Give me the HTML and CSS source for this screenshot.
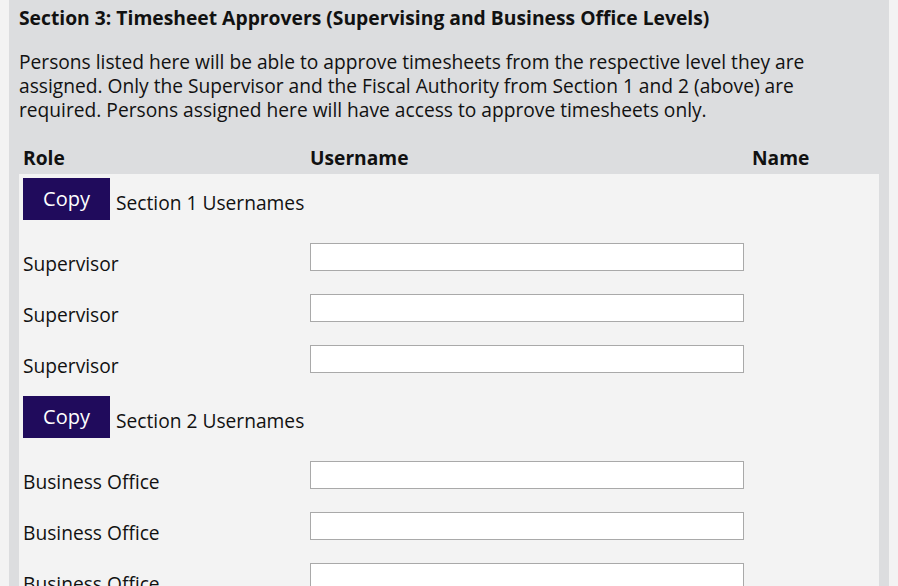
FILE: index.html
```html
<!DOCTYPE html>
<html>
<head>
<meta charset="utf-8">
<link rel="stylesheet" href="styles.css">
</head>
<body>
<div class="panel">
  <h3 class="title">Section 3: Timesheet Approvers (Supervising and Business Office Levels)</h3>
  <p class="intro">Persons listed here will be able to approve timesheets from the respective level they are assigned. Only the Supervisor and the Fiscal Authority from Section 1 and 2 (above) are required. Persons assigned here will have access to approve timesheets only.</p>
  <div class="cols head">
    <span>Role</span><span>Username</span><span>Name</span>
  </div>
  <div class="body">
    <div class="copy-row"><button class="copy">Copy</button><span class="copy-label">Section 1 Usernames</span></div>
    <div class="cols row"><span class="role">Supervisor</span><input class="field" type="text"><span></span></div>
    <div class="cols row"><span class="role">Supervisor</span><input class="field" type="text"><span></span></div>
    <div class="cols row"><span class="role">Supervisor</span><input class="field" type="text"><span></span></div>
    <div class="copy-row"><button class="copy">Copy</button><span class="copy-label">Section 2 Usernames</span></div>
    <div class="cols row"><span class="role">Business Office</span><input class="field" type="text"><span></span></div>
    <div class="cols row"><span class="role">Business Office</span><input class="field" type="text"><span></span></div>
    <div class="cols row"><span class="role">Business Office</span><input class="field" type="text"><span></span></div>
  </div>
</div>
</body>
</html>
```

FILE: styles.css
```css
html, body {
  margin: 0;
  padding: 0;
  background: #f3f3f3;
  font-family: "Open Sans", "Noto Sans", sans-serif;
  color: #111;
  overflow: hidden;
}
.panel {
  margin-left: 9px;
  width: 860px;
  padding: 6px 10px 0;
  background: #dcdddf;
  min-height: 600px;
}
.title {
  margin: 0;
  font-size: 19.3px;
  line-height: 24px;
  font-weight: 700;
}
.intro {
  margin: 20px 0 0;
  font-size: 19.2px;
  line-height: 24px;
}
.cols {
  display: grid;
  grid-template-columns: 287px 442px 1fr;
  padding-left: 4px;
}
.head {
  margin-top: 24px;
  height: 28px;
  font-size: 19.2px;
  line-height: 24px;
  font-weight: 700;
}
.body {
  background: #f3f3f3;
  min-height: 420px;
}
.copy-row {
  height: 65px;
  box-sizing: border-box;
  padding: 4px 0 0 4px;
  display: flex;
  align-items: baseline;
}
.copy {
  width: 87px;
  height: 42px;
  border: 0;
  margin: 0;
  padding: 0;
  background: #200b5c;
  color: #fff;
  font-family: inherit;
  font-size: 20px;
  line-height: 42px;
}
.copy-label {
  margin-left: 6px;
  font-size: 19.2px;
  line-height: 24px;
  position: relative;
  top: 4px;
}
.row {
  height: 51px;
  align-items: start;
}
.role {
  padding-top: 13px;
  font-size: 19.2px;
  line-height: 24px;
}
.field {
  margin: 4px 0 0;
  width: 434px;
  height: 28px;
  box-sizing: border-box;
  border: 1px solid #a9a9a9;
  background: #fff;
  padding: 0 4px;
}
```
